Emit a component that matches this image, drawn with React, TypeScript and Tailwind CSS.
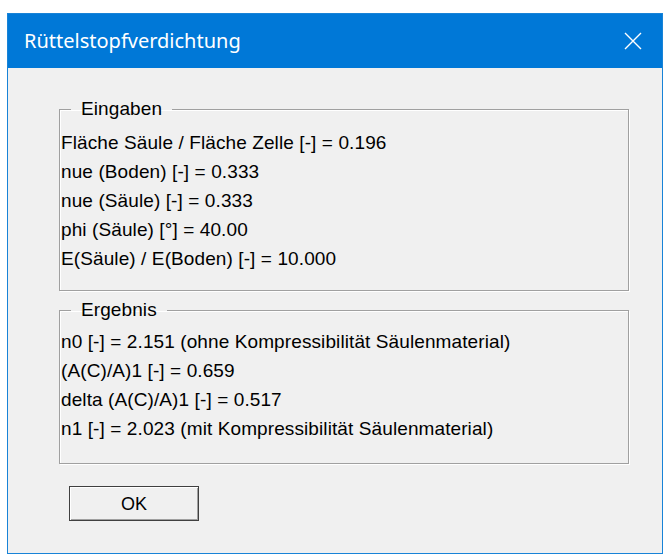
import React from "react";

const INPUTS = [
  "Fläche Säule / Fläche Zelle [-] = 0.196",
  "nue (Boden) [-] = 0.333",
  "nue (Säule) [-] = 0.333",
  "phi (Säule) [°] = 40.00",
  "E(Säule) / E(Boden) [-] = 10.000",
];

const RESULTS = [
  "n0 [-] = 2.151 (ohne Kompressibilität Säulenmaterial)",
  "(A(C)/A)1 [-] = 0.659",
  "delta (A(C)/A)1 [-] = 0.517",
  "n1 [-] = 2.023 (mit Kompressibilität Säulenmaterial)",
];

function GroupBox({ title, rows, className }: { title: string; rows: string[]; className: string }) {
  return (
    <fieldset
      className={`ml-[51px] w-[570px] border border-[#a0a0a0] shadow-[1px_1px_0_#ffffff,inset_1px_1px_0_#ffffff] px-[1px] ${className}`}
    >
      <legend className="ml-[10px] px-[10px] leading-[22px]">{title}</legend>
      {rows.map((r) => (
        <div key={r} className="leading-[29px] whitespace-nowrap">
          {r}
        </div>
      ))}
    </fieldset>
  );
}

export default function App() {
  return (
    <div className="w-[669px] h-[556px] bg-white pt-[13px] pl-[7px]">
      <div className="w-[656px] h-[541px] border border-[#1883d7] bg-[#f0f0f0] flex flex-col">
        <div className="h-[54px] bg-[#0078d7] flex items-center justify-between pl-[16px] pr-[20px] text-white">
          <span className="text-[20px] leading-none" style={{ fontFamily: '"Noto Sans", sans-serif' }}>
            Rüttelstopfverdichtung
          </span>
          <svg width="18" height="18" viewBox="0 0 18 18">
            <path d="M1 1 L17 17 M17 1 L1 17" stroke="#ffffff" strokeWidth="1.4" fill="none" />
          </svg>
        </div>
        <div
          className="flex flex-col text-[19px] tracking-[0.1px] text-black pt-[30px]"
          style={{ fontFamily: '"Liberation Sans", Arial, sans-serif' }}
        >
          <GroupBox title="Eingaben" rows={INPUTS} className="pt-[8px] pb-[17px]" />
          <GroupBox title="Ergebnis" rows={RESULTS} className="mt-[8px] pt-[6px] pb-[20px]" />
          <button className="ml-[61px] mt-[22px] w-[130px] h-[35px] bg-[#f0f0f0] border border-[#404040] shadow-[inset_1px_1px_0_#ffffff,inset_-1px_-1px_0_#a0a0a0] text-[18px] leading-none">
            OK
          </button>
        </div>
      </div>
    </div>
  );
}
